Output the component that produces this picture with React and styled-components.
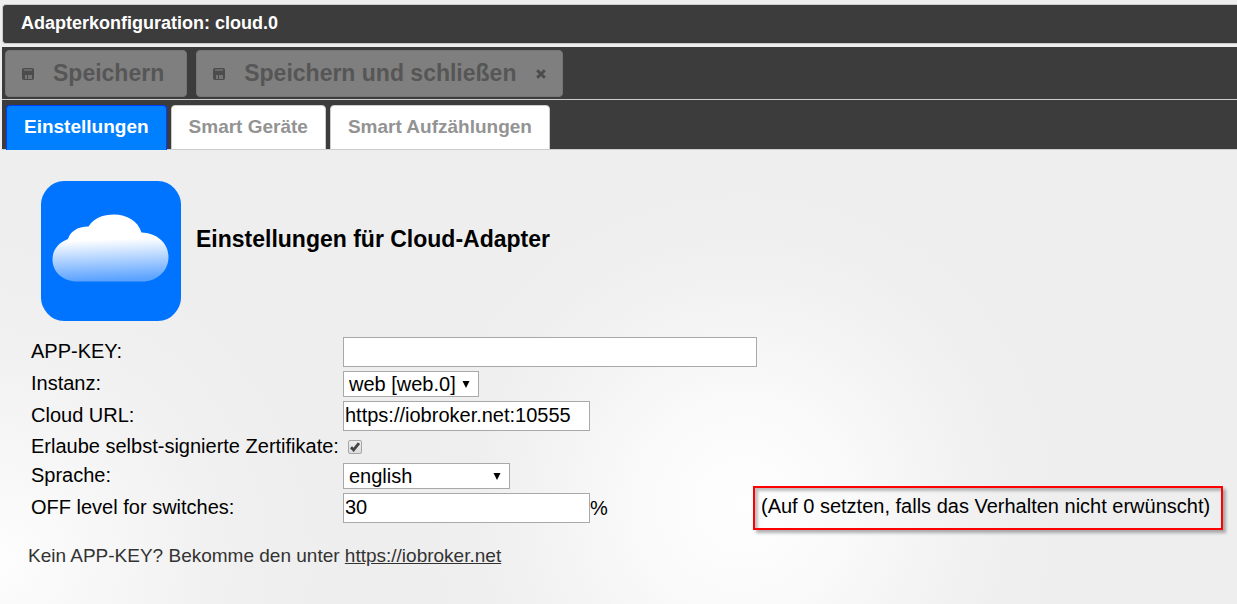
import React, { useState } from 'react';
import styled, { createGlobalStyle } from 'styled-components';

const App = () => {
    const [tab, setTab] = useState(0);

    return (
        <Page>
            <GlobalStyle />
            <TitleBar>Adapterkonfiguration: cloud.0</TitleBar>
            <Toolbar>
                <ToolButton type="button" disabled>
                    <SaveIcon />
                    <span>Speichern</span>
                </ToolButton>
                <ToolButton type="button" disabled>
                    <SaveIcon />
                    <span>Speichern und schließen</span>
                    <CloseIcon />
                </ToolButton>
            </Toolbar>
            <Tabs role="tablist">
                {tabs.map((name, i) => (
                    <Tab
                        key={name}
                        type="button"
                        role="tab"
                        aria-selected={i === tab}
                        $active={i === tab}
                        onClick={() => setTab(i)}
                    >
                        {name}
                    </Tab>
                ))}
            </Tabs>
            <Panel>
                <Header>
                    <CloudLogo />
                    <Heading>Einstellungen für Cloud-Adapter</Heading>
                </Header>
                <Form>
                    <Label htmlFor="apikey">APP-KEY:</Label>
                    <Field $wide>
                        <TextInput id="apikey" $wide />
                    </Field>

                    <Label htmlFor="instance">Instanz:</Label>
                    <Field $wide>
                        <SelectBox>
                            <Select id="instance" $width={136}>
                                <option>web [web.0]</option>
                            </Select>
                            <Arrow />
                        </SelectBox>
                    </Field>

                    <Label htmlFor="cloudUrl">Cloud URL:</Label>
                    <Field $wide>
                        <TextInput id="cloudUrl" defaultValue="https://iobroker.net:10555" />
                    </Field>

                    <Label htmlFor="allowSelfSigned">Erlaube selbst-signierte Zertifikate:</Label>
                    <Field $wide>
                        <Checkbox>
                            <input id="allowSelfSigned" type="checkbox" defaultChecked />
                            <svg width="14" height="14" viewBox="0 0 14 14" aria-hidden="true">
                                <path d="M3 7.2 5.6 9.8 11 3.2" />
                            </svg>
                        </Checkbox>
                    </Field>

                    <Label htmlFor="language">Sprache:</Label>
                    <Field $wide>
                        <SelectBox>
                            <Select id="language" $width={167}>
                                <option>english</option>
                            </Select>
                            <Arrow />
                        </SelectBox>
                    </Field>

                    <Label htmlFor="offLevel">OFF level for switches:</Label>
                    <Field>
                        <TextInput id="offLevel" defaultValue="30" />
                        %
                    </Field>
                    <Hint>(Auf 0 setzten, falls das Verhalten nicht erwünscht)</Hint>
                </Form>
                <Note>
                    Kein APP-KEY? Bekomme den unter <a href="https://iobroker.net">https://iobroker.net</a>
                </Note>
            </Panel>
        </Page>
    )
}

const tabs = ['Einstellungen', 'Smart Geräte', 'Smart Aufzählungen'];

const SaveIcon = () => (
    <svg width="12" height="12" viewBox="0 0 12 12" aria-hidden="true">
        <path fill="#4c4c4c" d="M2 0h8q2 0 2 2v8q0 2-2 2H2q-2 0-2-2V2q0-2 2-2z" />
        <path fill="#686868" d="M2 1h8v2H2z" />
        <path fill="#747474" d="M3 7h2v4H3zM6 7h4v4H6z" />
    </svg>
);

const CloseIcon = () => (
    <svg width="10" height="10" viewBox="0 0 10 10" aria-hidden="true">
        <path stroke="#4c4c4c" strokeWidth="3" d="M1.2 1.2 8.8 8.8M8.8 1.2 1.2 8.8" />
    </svg>
);

const Arrow = () => (
    <svg width="8" height="8" viewBox="0 0 8 8" aria-hidden="true">
        <path d="M0.5 1h7L4 8z" />
    </svg>
);

const CloudLogo = () => (
    <svg width="142" height="142" viewBox="0 0 142 142" aria-hidden="true">
        <defs>
            <linearGradient id="cloudFill" x1="0" y1="0" x2="0.06" y2="1">
                <stop offset="0.4" stopColor="#fff" />
                <stop offset="1" stopColor="#5ca3ff" />
            </linearGradient>
        </defs>
        <path
            fill="#0073ff"
            d="M24 1H118Q128 1 134.500 8.500Q141 16 141 24V118Q141 126 134.500 133.500Q128 141 118 141H24Q14 141 7.500 133.500Q1 126 1 118V24Q1 16 7.500 8.500Q14 1 24 1z"
        />
        <path
            fill="url(#cloudFill)"
            d="M37 101.500C23 101.500 12.500 92 12.500 79.500C12.500 70 18 63 28 59C30 52 37 46.500 48.500 46.500C54 38 63 34.500 74 34.500C87 34.500 98 41 101.500 52.500C117 53 128.500 63 128.500 77C128.500 91 117 101.500 102 101.500z"
        />
    </svg>
);

const GlobalStyle = createGlobalStyle`
    body {
        margin: 0;
        background: #eee;
        font-family: 'Liberation Sans', Arial, sans-serif;
        color: #000;
    }
`
const Page = styled.div`
    display: flex;
    flex-direction: column;
    min-height: 100vh;
    box-sizing: border-box;
    padding: 4px 0 0 2px;
`
const TitleBar = styled.header`
    margin-bottom: 3px;
    padding: 0 18px 2px;
    border: 1px solid #ccc;
    border-right: 0;
    border-radius: 4px 0 0 4px;
    background: #3c3c3c;
    color: #fff;
    font-size: 18px;
    font-weight: bold;
    line-height: 36px;
`
const Toolbar = styled.div`
    display: flex;
    gap: 9px;
    padding: 3px 3px 2px;
    background: #3c3c3c;
    border-bottom: 1px solid #ccc;
`
const ToolButton = styled.button`
    display: flex;
    align-items: center;
    height: 47px;
    padding: 0 16px;
    border: 1px solid #757575;
    border-radius: 4px;
    background: #7f7f7f;
    color: #565656;
    font-family: inherit;
    font-size: 23px;
    font-weight: bold;

    span {
        padding: 0 6px 0 19px;
    }

    span + svg {
        margin-left: 14px;
    }
`
const Tabs = styled.div`
    display: flex;
    gap: 4px;
    padding: 5px 4px 0;
    background: #3c3c3c;
    box-shadow: inset 0 -1px #ccc;
`
const Tab = styled.button`
    height: 45px;
    padding: 0 17px 2px;
    border: 1px solid ${(props) => (props.$active ? '#003eff' : '#ccc')};
    border-bottom: ${(props) => (props.$active ? '0' : '1px solid #ccc')};
    border-radius: 4px 4px 0 0;
    background: ${(props) => (props.$active ? '#007fff' : '#fff')};
    color: ${(props) => (props.$active ? '#fff' : '#939393')};
    font-family: inherit;
    font-size: 19px;
    font-weight: bold;
`
const Panel = styled.main`
    flex: 1;
    margin-left: -2px;
    padding: 30px 14px 30px 28px;
    background:
        radial-gradient(circle at 0 410px, #fdfdfd 0, #f6f6f6 120px, #f0f0f0 230px, #eee 340px, transparent 340px),
        radial-gradient(circle at 743px 355px, #fefefe 0, #fafafa 100px, #f3f3f3 200px, #efefef 270px, #eee 360px);
`
const Header = styled.div`
    display: flex;
    align-items: center;
    gap: 14px;
    padding-left: 12px;
    margin-bottom: 15px;
`
const Heading = styled.h1`
    margin: 0 0 24px;
    font-size: 23px;
`
const Form = styled.form`
    display: grid;
    grid-template-columns: 312px 410px 1fr;
    row-gap: 4px;
    padding-left: 3px;
    font-size: 20px;
`
const Label = styled.label`
    align-self: center;
    padding-bottom: 2px;
    line-height: 22px;
    white-space: nowrap;
`
const Field = styled.div`
    display: flex;
    align-items: center;
    grid-column: ${(props) => (props.$wide ? '2 / 4' : '2')};
`
const TextInput = styled.input`
    box-sizing: border-box;
    width: ${(props) => (props.$wide ? 414 : 247)}px;
    height: 30px;
    padding: 0 1px 2px;
    border: 1px solid #a9a9a9;
    background: #fff;
    font: inherit;
`
const SelectBox = styled.div`
    display: flex;
    align-items: center;

    svg {
        margin-left: -17px;
        pointer-events: none;
    }
`
const Select = styled.select`
    appearance: none;
    box-sizing: border-box;
    width: ${(props) => props.$width}px;
    height: 26px;
    padding: 0 5px;
    border: 1px solid #a9a9a9;
    border-radius: 0;
    background: #fff;
    color: #000;
    font: inherit;
`
const Checkbox = styled.div`
    display: grid;
    margin-left: 5px;

    input,
    svg {
        grid-area: 1 / 1;
    }

    input {
        appearance: none;
        box-sizing: border-box;
        width: 14px;
        height: 14px;
        margin: 0;
        border: 1px solid #a6a6a6;
        border-radius: 2px;
        background: linear-gradient(#eee, #dcdcdc);
    }

    svg {
        fill: none;
        stroke: #444;
        stroke-width: 2.8;
        pointer-events: none;
    }

    input:not(:checked) + svg {
        visibility: hidden;
    }
`
const Hint = styled.div`
    justify-self: start;
    margin: -7px 0;
    padding: 0 11px 4px 6px;
    border: 2px solid #f00;
    box-shadow: 3px 3px 3px rgba(0, 0, 0, 0.3), inset 3px 3px 3px rgba(0, 0, 0, 0.25);
    line-height: 36px;
    white-space: nowrap;
`
const Note = styled.p`
    margin: 21px 0 0;
    color: #333;
    font-size: 19px;
    line-height: 24px;

    a {
        color: inherit;
    }
`

export default App;
